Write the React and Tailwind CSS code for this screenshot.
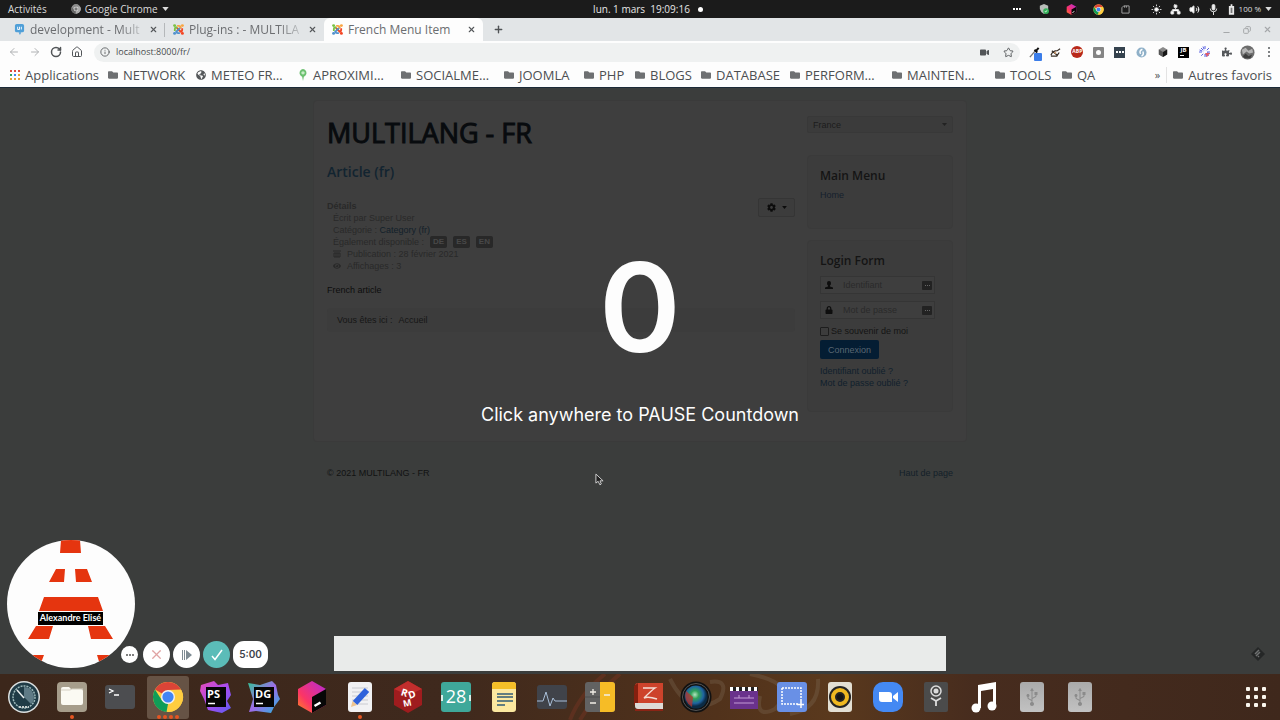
import React from "react";
import {
  ArrowLeft, ArrowRight, RotateCw, House, Info, Star, Plus, X, Minus, Copy, Sun, Network, Volume2, Mic,
} from "lucide-react";
import { FaFolder, FaGlobeAmericas, FaPuzzlePiece, FaVideo, FaLock, FaCog, FaEye, FaUsb } from "react-icons/fa";

function Chrome({ className, grey = false }) {
  const c = grey ? ["#8b8b8b", "#a9a9a9", "#666666", "#777777"] : ["#db4437", "#ffcd40", "#0f9d58", "#4285f4"];
  return (
    <svg viewBox="0 0 32 32" className={className} aria-hidden="true">
      <circle cx="16" cy="16" r="15" fill={c[1]} />
      <path d="M16 16 L3 8.5 A15 15 0 0 1 29 8.5 L16 9Z" fill={c[0]} />
      <path d="M3 8.5 L10 19.5 L16 23 L14.5 31 A15 15 0 0 1 3 8.5Z" fill={c[2]} />
      <path d="M16 9 H29.3 A15 15 0 0 1 15 31 L22 19.5Z" fill={c[1]} />
      <circle cx="16" cy="16" r="7" fill="#f1f1f1" />
      <circle cx="16" cy="16" r="5.6" fill={c[3]} />
    </svg>
  );
}

function Joomla() {
  return (
    <svg viewBox="0 0 24 24" className="size-[11px] shrink-0" fill="none" strokeWidth="4" aria-hidden="true">
      <path d="M4 15 L4 11 Q4 8 7 7 L15 15" stroke="#7ac143" transform="rotate(0 12 12)" />
      <path d="M4 15 L4 11 Q4 8 7 7 L15 15" stroke="#f9a541" transform="rotate(90 12 12)" />
      <path d="M4 15 L4 11 Q4 8 7 7 L15 15" stroke="#f44321" transform="rotate(180 12 12)" />
      <path d="M4 15 L4 11 Q4 8 7 7 L15 15" stroke="#5091cd" transform="rotate(270 12 12)" />
      <circle cx="3.5" cy="3.5" r="3.2" fill="#7ac143" />
      <circle cx="20.500" cy="3.500" r="3.2" fill="#f9a541" />
      <circle cx="20.5" cy="20.5" r="3.2" fill="#f44321" />
      <circle cx="3.5" cy="20.5" r="3.2" fill="#5091cd" />
    </svg>
  );
}

function Caret({ className }) {
  return (
    <svg viewBox="0 0 8 5" className={className} aria-hidden="true">
      <path d="M0 0H8L4 5Z" fill="currentColor" />
    </svg>
  );
}

function Cube({ className }) {
  return (
    <svg viewBox="0 0 32 32" className={className} aria-hidden="true">
      <defs>
        <linearGradient id="cube" x1="0" y1="1" x2="1" y2="0">
          <stop offset="0" stopColor="#ff8a1e" />
          <stop offset="0.35" stopColor="#fb3566" />
          <stop offset="1" stopColor="#b52ad8" />
        </linearGradient>
      </defs>
      <path d="M16 0 L30 8 V24 L16 32 L2 24 V8Z" fill="url(#cube)" />
      <path d="M16 16 L30 8 V24 L16 32Z" fill="#070707" />
      <path d="M18.500 25 L24.500 21.500" stroke="#fff" strokeWidth="2.5" />
    </svg>
  );
}

function TopBar() {
  return (
    <header className="grid h-[18px] shrink-0 grid-cols-[1fr_auto_1fr] items-center bg-[#1b1b1b] pr-2 pl-2 text-[10px] leading-[18px] text-[#dcdcdc]">
      <div className="flex items-center">
        <button className="mr-6">Activités</button>
        <button className="flex items-center">
          <Chrome grey className="mr-1 size-[10px]" />
          Google Chrome
          <Caret className="ml-1 h-[4px] w-[7px]" />
        </button>
      </div>
      <button className="flex items-center pl-4 text-[#e6e6e6]">
        <span className="whitespace-pre">lun. 1 mars  19:09:16</span>
        <span className="ml-2 size-[5px] rounded-full bg-white" />
      </button>
      <div className="flex items-center justify-end">
        <div className="grid grid-cols-5 items-center justify-items-center">
          <span className="flex w-[27px] justify-center gap-[1px]">
            <i className="size-[2px] bg-white" /><i className="size-[2px] bg-white" /><i className="size-[2px] bg-white" />
          </span>
          <svg viewBox="0 0 12 12" className="size-[10px]"><path d="M1 2 L6 0 L11 2 V6 Q10 10 6 12 Q2 10 1 6Z" fill="#b9bdb9" /><circle cx="8.500" cy="8.500" r="3.500" fill="#35b25a" /><path d="M7 8.500l1 1 2-2" stroke="#fff" fill="none" /></svg>
          <Cube className="size-[11px]" />
          <Chrome className="size-[11px]" />
          <svg viewBox="0 0 10 10" className="size-[9px]" fill="none" stroke="#a9a9a9"><path d="M1 3L3 1H9V9H1Z M4 1V3 M6 1V3" /></svg>
        </div>
        <div className="ml-2 grid grid-cols-4 items-center justify-items-center">
          <span className="flex w-[19px] justify-center"><Sun className="size-[11px] fill-white" /></span>
          <Network className="size-[11px] fill-white" strokeWidth={2} />
          <Volume2 className="size-[11px] fill-white" />
          <svg viewBox="0 0 12 12" className="size-[11px]" fill="none" stroke="#eee"><rect x="4.500" y="0.500" width="3" height="6" rx="1.500" fill="#eee" /><path d="M2.500 5Q2.500 8.500 6 8.500Q9.500 8.500 9.500 5M6 8.500V12" /></svg>
        </div>
        <button className="ml-[5px] flex items-center text-[8px]">
          <svg viewBox="0 0 8 12" className="mr-1 h-[11px] w-[7px]"><path d="M1 2H7V12H1Z M3 0H5V2H3Z" fill="#e8e8e8" /><path d="M3 4H5V10H3Z" fill="#777" /></svg>
          100 %
          <Caret className="ml-1 h-[4px] w-[7px]" />
        </button>
      </div>
    </header>
  );
}

function Tab({ icon, title, active = false, divider = false }) {
  return (
    <div className={"flex h-full w-[159px] items-center " + (active ? "rounded-t-md bg-[#fdfdfd]" : "")}>
      <div className={"flex h-[14px] flex-1 items-center border-r pr-[6px] pl-2 " + (divider ? "border-[#b5b8ba]" : "border-transparent")}>
        {icon}
        <span className={"ml-[5px] flex-1 text-[12px] leading-[20px] whitespace-nowrap text-[#6b6d70] " + (active ? "" : "[mask-image:linear-gradient(to_right,black_75%,transparent)]")}>
          {title}
        </span>
        <button aria-label="Fermer"><X className="size-[9px] text-[#55585b]" strokeWidth={3} /></button>
      </div>
    </div>
  );
}

const bookmarks = [
  ["NETWORK", "w-[88px]", "folder"],
  ["METEO FR…", "w-[102px]", "globe"],
  ["APROXIMI…", "w-[103px]", "pin"],
  ["SOCIALME…", "w-[103px]", "folder"],
  ["JOOMLA", "w-[80px]", "folder"],
  ["PHP", "w-[51px]", "folder"],
  ["BLOGS", "w-[66px]", "folder"],
  ["DATABASE", "w-[89px]", "folder"],
  ["PERFORM…", "w-[102px]", "folder"],
  ["MAINTEN…", "w-[103px]", "folder"],
  ["TOOLS", "w-[67px]", "folder"],
  ["QA", "w-[40px]", "folder"],
];

function MarkIcon({ kind }) {
  if (kind === "globe") return <FaGlobeAmericas className="size-[10px] shrink-0 text-[#55585a]" />;
  if (kind === "pin")
    return (
      <svg viewBox="0 0 10 14" className="h-[12px] w-[10px] shrink-0"><path d="M5 14L4 9A4 4.500 0 1 1 6 9Z" fill="#6cc070" /><circle cx="5" cy="4.500" r="2" fill="#c9ecc8" /></svg>
    );
  return <FaFolder className="size-[10px] shrink-0 text-[#6e7072]" />;
}

function Extensions() {
  return (
    <div className="grid w-64 grid-cols-12 items-center justify-items-center">
      <span className="relative">
        <svg viewBox="0 0 12 12" className="size-[11px]"><path d="M1 11L7 4" stroke="#777" strokeWidth="1.500" /><path d="M6 3L9 6M7 5L10.500 1" stroke="#111" strokeWidth="2.200" /></svg>
        <span className="absolute top-[6px] left-[5px] size-[8px] rounded-[1px] bg-[#3b7de9]" />
      </span>
      <svg viewBox="0 0 12 12" className="size-[11px]"><path d="M1 9Q3 4 8 4L11 2M2 4L8 9L10 6M1 10H8" stroke="#3a3129" strokeWidth="1.400" fill="none" /><path d="M4 6L7 5L6 8Z" fill="#d9a070" /></svg>
      <span className="flex size-[12px] items-center justify-center rounded-full bg-[#b8281a] text-[5px] font-bold text-white">ABP</span>
      <span className="flex size-[11px] items-center justify-center rounded-[1px] bg-[#858585]"><i className="size-[5px] rounded-full bg-white" /></span>
      <span className="flex size-[11px] items-center justify-center gap-[1px] bg-[#35424e]"><i className="size-[2px] bg-white" /><i className="size-[2px] bg-white" /><i className="size-[2px] bg-white" /></span>
      <svg viewBox="0 0 12 12" className="size-[11px]"><circle cx="6" cy="6" r="5.500" fill="#8fb0c8" /><path d="M7 2.500Q3 4 5 7.500M6 10Q9 8.500 7.500 5" stroke="#fff" strokeWidth="1.600" fill="none" /></svg>
      <svg viewBox="0 0 12 12" className="size-[10px]"><path d="M6 0L11 3V9L6 12L1 9V3Z" fill="#8a8a8a" /><path d="M6 6L11 3V9L6 12Z" fill="#161616" /><path d="M1 3L6 6V12L1 9Z" fill="#555" /></svg>
      <span className="flex size-[11px] flex-col bg-black px-[2px] text-[6px] leading-[7px] font-bold text-white">JB<i className="mt-[1px] h-[1px] w-[4px] bg-white" /></span>
      <svg viewBox="0 0 12 12" className="size-[12px]"><g stroke="#5b63e0" strokeWidth="1" strokeDasharray="3 1"><path d="M6 0V12M0 6H12M2 2L10 10M10 2L2 10M4 0.500L8 11.500M0.500 4L11.500 8" /></g><circle cx="6" cy="6" r="2" fill="#fff" /><path d="M6 7H11L8 11Z" fill="#e05a6a" /></svg>
      <FaPuzzlePiece className="size-[10px] text-[#55585b]" />
      <svg viewBox="0 0 16 16" className="size-[15px]"><circle cx="8" cy="8" r="7.500" fill="#6d6d6d" /><path d="M2 5L6 3L9 6L13 4L14 8L10 9L7 7L3 10Z" fill="#b5b5b5" /><path d="M3 12L6 9L9 12L13 10L11 14H5Z" fill="#3d3d3d" /></svg>
      <button aria-label="Menu" className="flex flex-col gap-[2px]"><i className="size-[2px] rounded-full bg-[#55585b]" /><i className="size-[2px] rounded-full bg-[#55585b]" /><i className="size-[2px] rounded-full bg-[#55585b]" /></button>
    </div>
  );
}

function Browser() {
  return (
    <>
      <nav aria-label="Onglets" className="flex h-[23px] shrink-0 items-center bg-[#e2e5e7] pr-2 pl-[6px]">
        <Tab divider icon={<svg viewBox="0 0 12 12" className="size-[11px] shrink-0"><rect x="1" width="10" height="9" rx="2" fill="#4f9fd8" /><path d="M5 9H8L6.500 12Z" fill="#4f9fd8" /><path d="M4 3V6M6 3V6H4M8 3V6" stroke="#fff" fill="none" /></svg>} title="development - Mult" />
        <Tab icon={<Joomla />} title="Plug-ins : - MULTILA" />
        <Tab active icon={<Joomla />} title="French Menu Item" />
        <button aria-label="Nouvel onglet" className="ml-[10px]"><Plus className="size-[11px] text-[#505356]" strokeWidth={3} /></button>
        <div className="ml-auto flex items-center gap-3 text-[#a5a8aa]">
          <button aria-label="Réduire" className="pt-[6px]"><Minus className="size-[9px]" strokeWidth={3} /></button>
          <button aria-label="Restaurer"><Copy className="size-[8px] -scale-x-100" strokeWidth={3} /></button>
          <button aria-label="Fermer la fenêtre"><X className="size-[9px]" strokeWidth={3} /></button>
        </div>
      </nav>
      <div className="flex h-[22px] shrink-0 items-center bg-[#fdfdfd] pl-2 text-[#525558]">
        <div className="flex w-[86px] items-center gap-[9px]">
          <button aria-label="Précédent" className="text-[#b0b2b4]"><ArrowLeft className="size-[12px]" /></button>
          <button aria-label="Suivant" className="text-[#b0b2b4]"><ArrowRight className="size-[12px]" /></button>
          <button aria-label="Actualiser"><RotateCw className="size-[12px]" strokeWidth={3} /></button>
          <button aria-label="Accueil"><House className="size-[12px]" strokeWidth={2} /></button>
        </div>
        <div className="flex h-[19px] flex-1 items-center rounded-full bg-[#eff1f1] pr-[6px] pl-[6px]">
          <label htmlFor="url"><Info aria-label="Adresse" className="size-[10px]" strokeWidth={2} /></label>
          <input id="url" aria-label="Adresse" defaultValue="localhost:8000/fr/" className="ml-[6px] min-w-0 flex-1 bg-transparent text-[9px] text-[#4a4d50] outline-none" />
          <FaVideo className="mr-[14px] size-[9px]" />
          <button aria-label="Ajouter aux favoris"><Star className="size-[11px]" strokeWidth={2} /></button>
        </div>
        <div className="ml-1"><Extensions /></div>
      </div>
      <nav aria-label="Favoris" className="flex h-6 shrink-0 items-center bg-[#fdfdfd] pr-2 pl-[10px] text-[13px] leading-5 whitespace-nowrap text-[#4c4f52]">
        <a href="#apps" className="flex w-[98px] shrink-0 items-center gap-[5px]">
          <svg viewBox="0 0 10 10" className="size-[10px] shrink-0">
            <path d="M0 0h2v2H0zM4 0h2v2H4zM8 0h2v2H8z" fill="#dd4b3e" /><path d="M0 4h2v2H0z" fill="#35a35b" /><path d="M4 4h2v2H4z" fill="#4285f4" /><path d="M8 4h2v2H8zM0 8h2v2H0z" fill="#e8a33a" /><path d="M4 8h2v2H4zM8 8h2v2H8z" fill="#e8a33a" />
          </svg>
          Applications
        </a>
        {bookmarks.map(([name, width, kind]) => (
          <a key={name} href="#folder" className={"flex shrink-0 items-center gap-[5px] " + width}>
            <MarkIcon kind={kind} />
            {name}
          </a>
        ))}
        <button className="ml-auto border-r border-[#e3e3e3] pr-[6px] text-[11px] leading-4">»</button>
        <a href="#autres" className="ml-[6px] flex items-center gap-[5px]"><FaFolder className="size-[10px] text-[#6e7072]" />Autres favoris</a>
      </nav>
    </>
  );
}

function Field({ id, type, label, icon }) {
  return (
    <div className="flex h-[18px] w-[115px] items-center border border-[#353535] bg-[#3e3e3e]">
      <label htmlFor={id} className="flex h-full w-4 items-center justify-center text-[#0e0e0e]">
        {icon}
      </label>
      <input id={id} type={type} aria-label={label} placeholder={label} className="ml-[6px] min-w-0 flex-1 bg-transparent text-[9px] outline-none placeholder:text-[#2a2a2a]" />
      <span className="mr-[2px] flex h-[9px] w-[10px] items-center justify-center gap-[1px] rounded-[1px] bg-[#222222]"><i className="size-[1px] bg-[#666]" /><i className="size-[1px] bg-[#666]" /><i className="size-[1px] bg-[#666]" /></span>
    </div>
  );
}

function Site() {
  return (
    <div className="mx-auto w-full max-w-[654px] text-[9px] leading-[12px]">
      <div className="mt-3 flex gap-3 rounded-sm border border-[#3a3a3a] bg-[#3e3e3e] px-[13px] pt-[15px] pb-[29px]">
        <main className="min-w-0 flex-1">
          <h1 className="mt-[1px] font-[Open_Sans] text-[27px] leading-8 text-[#080b0e] [-webkit-text-stroke:1px_#080b0e]">MULTILANG - FR</h1>
          <h2 className="mt-[13px] font-[Open_Sans] text-[14px] leading-5 font-semibold text-[#122430]"><a href="#article">Article (fr)</a></h2>
          <div className="mt-4 flex items-start justify-between text-[#292929]">
            <div className="pt-[2px]">
              <p className="font-bold">Détails</p>
              <div className="pl-[6px]">
                <p>Écrit par Super User</p>
                <p>Catégorie : <a href="#category" className="text-[#12202a]">Category (fr)</a></p>
                <p className="flex items-center">
                  Également disponible :
                  {["DE", "ES", "EN"].map((l) => (
                    <a key={l} href="#lang" className="ml-[6px] rounded-[2px] bg-[#282828] px-[3px] text-[8px] leading-[12px] font-bold text-[#484848]">{l}</a>
                  ))}
                </p>
                <p className="flex items-center"><svg viewBox="0 0 8 8" className="mr-[6px] size-[8px]" fill="none" stroke="currentColor"><path d="M0 1H8M1 3H7V7H1ZM3 3V7M5 3V7" /></svg>Publication : 28 février 2021</p>
                <p className="flex items-center"><FaEye className="mr-[6px] size-[8px]" />Affichages : 3</p>
              </div>
            </div>
            <button aria-label="Options" className="flex h-[19px] w-[37px] items-center justify-center gap-[6px] rounded-[2px] border border-[#353535] bg-[#3c3c3c] text-[#0c0c0c]">
              <FaCog className="size-[9px]" /><Caret className="h-[3px] w-[5px]" />
            </button>
          </div>
          <p className="mt-3 text-[#0d0d0d]">French article</p>
          <nav className="mt-3 flex h-6 items-center gap-[6px] rounded-sm bg-[#3c3c3c] px-[10px] text-[#161616]"><span>Vous êtes ici :</span><span>Accueil</span></nav>
        </main>
        <aside className="w-[146px] text-[#141414]">
          <div className="relative">
            <select id="country" aria-label="Langue" className="block h-[17px] w-full appearance-none rounded-[2px] border border-[#383838] bg-[#3b3b3b] px-[5px] text-[9px] text-[#1b1b1b]"><option>France</option></select>
            <Caret className="pointer-events-none absolute top-[6px] right-[6px] h-[5px] w-[5px] text-[#222]" />
          </div>
          <section className="mt-[22px] h-[74px] rounded-sm border border-[#3a3a3a] bg-[#3c3c3c] p-3">
            <h3 className="font-[Open_Sans] text-[12px] leading-4 font-semibold">Main Menu</h3>
            <a href="#home" className="mt-[5px] block text-[#15202c]">Home</a>
          </section>
          <section className="mt-[11px] h-[172px] rounded-sm border border-[#3a3a3a] bg-[#3c3c3c] p-3">
            <h3 className="font-[Open_Sans] text-[12px] leading-4 font-semibold">Login Form</h3>
            <form onSubmit={(e) => e.preventDefault()} className="mt-[7px] flex flex-col items-start">
              <Field id="user" type="text" label="Identifiant" icon={<svg viewBox="0 0 8 8" className="size-[8px]"><path d="M4 0Q6 0 6 2Q6 4 5 4.500V5.500L8 6.500V8H0V6.500L3 5.500V4.500Q2 4 2 2Q2 0 4 0Z" fill="currentColor" /></svg>} />
              <div className="mt-[7px]"><Field id="pass" type="password" label="Mot de passe" icon={<FaLock className="size-[8px]" />} /></div>
              <label className="mt-[6px] flex items-center gap-[2px]"><input type="checkbox" className="size-[9px] appearance-none rounded-[1px] border border-[#1d1d1d]" />Se souvenir de moi</label>
              <button className="mt-[3px] h-[19px] w-[59px] rounded-[2px] bg-[#041d33] text-[#596772]">Connexion</button>
            </form>
            <ul className="mt-[6px] text-[#10202c]"><li><a href="#id">Identifiant oublié ?</a></li><li><a href="#mdp">Mot de passe oublié ?</a></li></ul>
          </section>
        </aside>
      </div>
      <footer className="mt-[25px] flex justify-between px-[14px] text-[#111212]"><span>© 2021 MULTILANG - FR</span><a href="#top" className="text-[#132029]">Haut de page</a></footer>
    </div>
  );
}

function Recorder() {
  const round = "flex size-[27px] items-center justify-center rounded-full";
  return (
    <div className="absolute bottom-[6px] left-[7px] flex items-end">
      <svg viewBox="0 0 128 128" className="-mr-[14px] size-32">
        <defs><clipPath id="disc"><circle cx="64" cy="64" r="64" /></clipPath></defs>
        <g clipPath="url(#disc)">
          <rect width="128" height="128" fill="#fdfdfd" />
          <g fill="#e5350f">
            <path d="M54 0H73L74 13H53ZM49 29H58L57 42H42ZM68 29H80L85 42H69ZM37 57H91L96 71H32ZM29 86H46L42 99H21ZM81 86H98L106 99H84ZM16 115H37L32 128H10ZM90 115H110L118 128H94Z" />
          </g>
          <rect x="31" y="72" width="65" height="13" fill="#000" />
          <text x="63.500" y="81" textAnchor="middle" fontSize="9" fontWeight="700" fill="#fff" className="font-[Lato]">Alexandre Elisé</text>
        </g>
      </svg>
      <div className="relative flex items-center gap-[3px]">
        <button aria-label="Plus d'options" className="mr-[2px] flex size-[17px] items-center justify-center gap-[1px] rounded-full bg-white"><i className="size-[2px] rounded-full bg-[#555]" /><i className="size-[2px] rounded-full bg-[#555]" /><i className="size-[2px] rounded-full bg-[#555]" /></button>
        <button aria-label="Annuler" className={round + " bg-white"}><X className="size-[15px] text-[#e0a3a3]" strokeWidth={2} /></button>
        <button aria-label="Reprendre" className={round + " bg-white"}><svg viewBox="0 0 10 10" className="size-[10px]"><path d="M0 0H1V10H0ZM2 0H3V10H2ZM4 0L10 5L4 10Z" fill="#7e8b93" /></svg></button>
        <button aria-label="Terminer" className={round + " bg-[#5bbcb8]"}><svg viewBox="0 0 12 12" className="size-[12px]" fill="none" stroke="#fff" strokeWidth="1.500"><path d="M1 7L4 10.500L11 1" /></svg></button>
        <span className="flex h-[27px] w-[35px] items-center justify-center rounded-[11px] bg-white font-[Inter] text-[10px] leading-[27px] font-semibold text-[#3c3f4a]">5:00</span>
      </div>
    </div>
  );
}

const S = ({ children }) => <svg viewBox="0 0 32 32" className="size-8" aria-hidden="true">{children}</svg>;

function Ide({ id, text, colors, shape }) {
  return (
    <S>
      <defs><linearGradient id={id} x1="0" y1="0" x2="1" y2="1"><stop offset="0" stopColor={colors[0]} /><stop offset="0.5" stopColor={colors[1]} /><stop offset="1" stopColor={colors[2]} /></linearGradient></defs>
      <path d={shape} fill={`url(#${id})`} />
      <rect x="6" y="6" width="20" height="20" fill="#050505" />
      <text x="7" y="17" fontSize="11" fontWeight="700" fill="#fff" className="font-[Open_Sans]">{text}</text>
      <path d="M8 22.500H15" stroke="#fff" strokeWidth="1.500" />
    </S>
  );
}

const apps = [
  ["Timeshift", <S><circle cx="16" cy="16" r="16" fill="#dce1e1" /><circle cx="16" cy="16" r="14.500" fill="#1f3b46" /><circle cx="16" cy="16" r="11" fill="none" stroke="#9db9bb" strokeWidth="1.500" strokeDasharray="2 1" /><path d="M16 16V6A10 10 0 0 1 23 23Z" fill="#8aa7b0" opacity=".6" /><path d="M16 17L9 9" stroke="#e9eeee" strokeWidth="1.500" /><path d="M11 26H21" stroke="#c5cccc" strokeWidth="2" strokeDasharray="2 1" /></S>],
  ["Fichiers", <S><rect x="1" y="1" width="30" height="30" rx="4" fill="#a69d8b" /><path d="M5 8Q5 6 7 6H13L15 8H25Q27 8 27 10V22Q27 24 25 24H7Q5 24 5 22Z" fill="#fbfaf3" /><path d="M5 9H14L16 8H27" stroke="#d5d0c3" fill="none" /></S>, 1],
  ["Terminal", <S><rect x="1" y="4" width="30" height="24" rx="3" fill="#4c4d50" /><path d="M5 8L9 10L5 12M10 14H15" stroke="#fff" strokeWidth="1.300" fill="none" /></S>],
  ["Google Chrome", <Chrome className="size-8" />, 4],
  ["PhpStorm", <Ide id="ps" text="PS" colors={["#e64bb4", "#a94df0", "#5d5bf0"]} shape="M1 4L14 0L18 4L28 2L31 14L27 20L31 27L22 32L8 29L4 18L0 10Z" />],
  ["DataGrip", <Ide id="dg" text="DG" colors={["#2fc795", "#9f6be8", "#21b7dc"]} shape="M0 2L12 4L24 0L28 4L30 14L32 18L26 26L23 32L8 30L1 31L5 18Z" />],
  ["Toolbox", <Cube className="size-8" />],
  ["Éditeur", <S><rect x="4" y="1" width="24" height="30" rx="3" fill="#f1f1f3" /><path d="M8 7H24M8 11H24M8 15H24M8 19H24M8 23H24" stroke="#c9cad0" /><path d="M11 22L23 9" stroke="#2f62db" strokeWidth="6" /><path d="M7 26L8.500 20L13 24Z" fill="#eec490" /></S>, 1],
  ["RDM", <S><path d="M16 0L30 8V24L16 32L2 24V8Z" fill="#9f1c1e" /><path d="M16 0L30 8L16 14L2 8Z" fill="#c22e2d" /><g className="font-[Open_Sans]" fontWeight="700" fill="#fff"><text x="9" y="15" fontSize="10" transform="rotate(18 12 12)">R</text><text x="16" y="17" fontSize="10" transform="rotate(-18 20 13)">D</text><text x="11" y="25" fontSize="9" transform="rotate(-12 16 22)">M</text></g></S>],
  ["Agenda", <S><rect x="1" y="1" width="30" height="30" rx="3" fill="#3fa89a" /><path d="M1 14H3V20H1ZM29 14H31V20H29Z" fill="#d8efeb" /><text x="16" y="22" fontSize="18" textAnchor="middle" fill="#fff" className="font-[Open_Sans]">28</text></S>],
  ["Notes", <S><rect x="4" y="1" width="24" height="30" rx="3" fill="#fbe8a0" /><path d="M4 8V4Q4 1 7 1H25Q28 1 28 4V8Z" fill="#f5bf28" /><path d="M9 13H25M9 16H25M9 20H25M9 24H17" stroke="#315b75" strokeWidth="1.500" /></S>],
  ["Moniteur", <S><rect x="1" y="4" width="30" height="24" rx="3" fill="#40434a" /><path d="M1 20H7L10 11L14 25L17 17L19 20H31" stroke="#a9bfd8" fill="none" /></S>],
  ["Calculatrice", <S><rect x="1" y="1" width="30" height="30" rx="3" fill="#626262" /><path d="M16 1H28Q31 1 31 4V28Q31 31 28 31H16Z" fill="#f6bc26" /><path d="M1 16H16" stroke="#4c4c4c" /><path d="M6 11H12M9 8V14M6 22H12M20 14H26" stroke="#f2eee6" strokeWidth="1.300" /></S>],
  ["Zotero", <S><path d="M3 5Q3 2 6 2H31V23H3Z" fill="#cd432b" /><path d="M2 5L6 2V24H2Z" fill="#85200f" /><path d="M3 22H31V28H6Q3 28 3 25Z" fill="#dedbd6" /><path d="M3 29H31" stroke="#8b2415" strokeWidth="2" /><path d="M11 7H23Q20 9 12 17Q16 15 25 18" stroke="#f3ddd4" strokeWidth="1.500" fill="none" /></S>],
  ["Caméra", <S><defs><radialGradient id="lens" cx=".45" cy=".4"><stop offset="0" stopColor="#b4e4c0" /><stop offset=".35" stopColor="#2fa159" /><stop offset=".75" stopColor="#1f63a0" /><stop offset="1" stopColor="#0b2b45" /></radialGradient></defs><circle cx="16" cy="16" r="15.500" fill="#111" /><circle cx="16" cy="16" r="13.500" fill="none" stroke="#555" /><circle cx="16" cy="16" r="11.500" fill="url(#lens)" /><path d="M6 10Q3 20 12 26L13 16Z" fill="#b5342c" opacity=".75" /></S>],
  ["Montage", <S><path d="M2 10H30V28H2Z" fill="#6a328c" /><path d="M2 6H30V10H2Z" fill="#222" /><path d="M2 8H30" stroke="#fff" strokeWidth="4" strokeDasharray="3 3" /><path d="M6 17H26M6 22H26M11 14V17M21 14V17" stroke="#c39ad5" /></S>],
  ["Capture", <S><rect x="1" y="1" width="30" height="30" rx="3" fill="#6990e6" /><path d="M6 7H25V20M22 23H6V7" stroke="#fff" strokeWidth="1.500" strokeDasharray="2 1" fill="none" /><path d="M25 20V27M21 23.500H28" stroke="#fff" strokeWidth="1.500" /></S>],
  ["Rhythmbox", <S><rect x="4" y="1" width="24" height="30" rx="3" fill="#e3dfd3" /><circle cx="16" cy="16" r="11" fill="#242424" /><circle cx="16" cy="16" r="7" fill="none" stroke="#f0b921" strokeWidth="4" /><circle cx="16" cy="16" r="3" fill="#151515" /></S>],
  ["Zoom", <S><rect x="1" y="1" width="30" height="30" rx="10" fill="#4489f3" /><path d="M7 11H17Q20 11 20 14V21H10Q7 21 7 18ZM21 15L26 11V21L21 17Z" fill="#fff" /></S>],
  ["Accès", <S><rect x="4" y="1" width="24" height="30" rx="2" fill="#4b4b4b" /><circle cx="16" cy="10" r="5" fill="none" stroke="#ddd" strokeWidth="1.500" /><circle cx="16" cy="10" r="2.500" fill="#ddd" /><path d="M11 17L16 20L21 17M16 20V25" stroke="#ddd" strokeWidth="1.800" fill="none" /></S>],
  ["Musique", <S><path d="M10 4L28 1V24H25V8L13 10V27H10Z" fill="#fff" /><circle cx="8" cy="27" r="4.500" fill="#fff" /><circle cx="24" cy="25" r="4.500" fill="#fff" /></S>],
  ["USB 1", "usb"],
  ["USB 2", "usb"],
];

function Dock() {
  return (
    <nav aria-label="Dock" className="relative flex h-[46px] shrink-0 items-center justify-between overflow-hidden bg-[linear-gradient(to_right,#3c271b_0%,#3f291d_35%,#51321b_56%,#5a391d_65%,#472c1e_76%,#3f281c_100%)]">
      <svg viewBox="0 0 320 46" className="absolute top-0 left-[560px] h-[46px] w-[320px]" fill="none" strokeWidth="4" opacity="0.3" aria-hidden="true">
        <path d="M10 46Q20 20 45 0M20 46Q35 20 60 0" stroke="#8d3826" />
        <path d="M110 5Q130 45 160 25Q170 5 150 8M190 0Q240 10 215 35Q195 45 200 22M230 40Q260 35 258 5" stroke="#81705c" />
      </svg>
      <div className="relative flex">
        {apps.map(([name, icon, dots]) => (
          <button key={name} aria-label={name} className="flex h-[46px] w-12 items-center justify-center">
            <span className={"relative flex h-[43px] w-[42px] items-center justify-center rounded-[3px] " + (dots === 4 ? "bg-[#665345]" : "")}>
              {icon === "usb" ? <span className="flex h-[30px] w-6 items-center justify-center rounded-[3px] bg-linear-to-b from-[#aaa] to-[#c2c2c2]"><FaUsb className="size-[18px] -rotate-90 text-[#8b8b8b]" /></span> : icon}
              {dots ? (
                <span className="absolute bottom-0 flex gap-[2px]">
                  {Array.from({ length: dots }, (_, i) => <i key={i} className="size-[4px] rounded-full bg-[#e65522]" />)}
                </span>
              ) : null}
            </span>
          </button>
        ))}
      </div>
      <button aria-label="Applications" className="mr-[14px] grid grid-cols-3 gap-1">
        {Array.from({ length: 9 }, (_, i) => <i key={i} className="size-[4px] rounded-[1px] bg-[#faf6ee]" />)}
      </button>
    </nav>
  );
}

export default function App() {
  return (
    <div className="flex min-h-screen flex-col font-['Open_Sans','Noto_Sans',sans-serif]">
      <TopBar />
      <Browser />
      <div className="relative flex-1 overflow-hidden border-t border-[#1c2a37] bg-[#3b3d3c] font-['Liberation_Sans',Arial,sans-serif]">
        <Site />
        <button className="absolute inset-0 flex w-full flex-col items-center pt-[157px] font-[Inter] text-[#fdfdfd]">
          <span className="text-[124px] leading-[124px] font-semibold">0</span>
          <span className="mt-[34px] text-[18px] leading-6 font-normal">Click anywhere to PAUSE Countdown</span>
        </button>
        <svg viewBox="0 0 10 14" className="absolute top-[385px] left-[595px] h-[13px] w-[9px]" aria-hidden="true"><path d="M1 1V11L3.500 9L5.500 13L7 12L5.500 8.500H9Z" fill="#222" stroke="#ddd" /></svg>
        <div className="absolute bottom-[3px] left-1/2 h-[35px] w-[612px] -translate-x-1/2 bg-[#e9ebea]" />
        <Recorder />
        <svg viewBox="0 0 16 16" className="absolute right-[14px] bottom-3 size-4" aria-hidden="true"><path d="M8 1L15 8L8 15L1 8Z" fill="#252727" /><path d="M5 8L9 4M6 10L10 6M8 11L9 10" stroke="#707272" strokeWidth="1.500" /></svg>
      </div>
      <Dock />
    </div>
  );
}
